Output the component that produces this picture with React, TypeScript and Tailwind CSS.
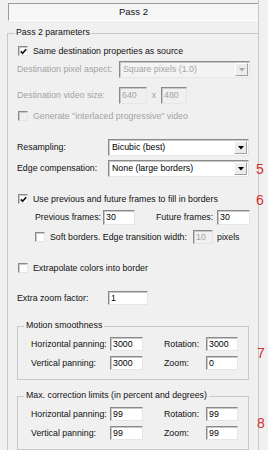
import React from "react";

const sunken =
  "border-t border-l border-t-[#8a8a8a] border-l-[#8a8a8a] border-b border-r border-b-[#e6e6e6] border-r-[#e6e6e6] shadow-[inset_1px_1px_0_#c8c8c8]";

function CheckBox({ checked, disabled }: { checked?: boolean; disabled?: boolean }) {
  return (
    <div
      className={`w-[10px] h-[10px] shrink-0 flex items-center justify-center ${sunken} ${
        disabled ? "bg-[#f0f0f0]" : "bg-white"
      }`}
    >
      {checked && (
        <svg width="7" height="7" viewBox="0 0 7 7">
          <path d="M0.8 3.4 L2.6 5.3 L6.2 1.2" fill="none" stroke="#111" strokeWidth="1.7" />
        </svg>
      )}
    </div>
  );
}

function Field({
  value,
  w,
  h = 14,
  disabled,
}: {
  value: string;
  w: string;
  h?: number;
  disabled?: boolean;
}) {
  return (
    <div
      className={`${w} ${h === 17 ? "h-[17px]" : h === 15 ? "h-[15px]" : "h-[14px]"} shrink-0 flex items-center pl-[2px] ${sunken} ${
        disabled ? "bg-[#f0f0f0] text-[#a3a3a3]" : "bg-white text-black"
      }`}
    >
      {value}
    </div>
  );
}

function Select({ value, w, disabled }: { value: string; w: string; disabled?: boolean }) {
  return (
    <div
      className={`${w} h-[17px] shrink-0 flex items-center ${sunken} ${
        disabled ? "bg-[#f4f4f4] text-[#a3a3a3]" : "bg-white text-black"
      }`}
    >
      <span className="flex-1 pl-[3px]">{value}</span>
      <div className="w-[13px] h-[13px] mr-[1px] flex items-center justify-center bg-[#ececec] border border-t-white border-l-white border-b-[#a0a0a0] border-r-[#a0a0a0]">
        <svg width="6" height="4" viewBox="0 0 6 4">
          <path d="M0 0 H6 L3 3.5 Z" fill={disabled ? "#a8a8a8" : "#000"} />
        </svg>
      </div>
    </div>
  );
}

function Row({ children, className = "" }: { children: React.ReactNode; className?: string }) {
  return <div className={`flex items-center ${className}`}>{children}</div>;
}

function Mark({ n, className }: { n: string; className: string }) {
  return (
    <span
      className={`absolute text-[14px] leading-none text-[#d2302c] font-['Liberation_Sans',Arial,sans-serif] ${className}`}
    >
      {n}
    </span>
  );
}

function PanGroup({
  title,
  a,
  b,
  c,
  d,
  mt,
}: {
  title: string;
  a: string;
  b: string;
  c: string;
  d: string;
  mt: string;
}) {
  return (
    <div className={`relative ${mt} ml-[9px] w-[232px] border border-[#c9c9c9] pb-[9px]`}>
      <span className="absolute -top-[6px] left-[6px] px-[2px] bg-[#f0f0f0]">{title}</span>
      <Row className="mt-[10px] h-[14px] pl-[13px]">
        <span className="w-[79px]">Horizontal panning:</span>
        <Field value={a} w="w-[33px]" />
        <span className="ml-[21px] w-[42px]">Rotation:</span>
        <Field value={b} w="w-[32px]" />
      </Row>
      <Row className="mt-[5px] h-[14px] pl-[13px]">
        <span className="w-[79px]">Vertical panning:</span>
        <Field value={c} w="w-[33px]" />
        <span className="ml-[21px] w-[42px]">Zoom:</span>
        <Field value={d} w="w-[32px]" />
      </Row>
    </div>
  );
}

export default function App() {
  return (
    <div className="relative w-[268px] h-[450px] overflow-hidden bg-[#f0f0f0] text-[#111] text-[8.8px] leading-none font-['Liberation_Sans',Arial,sans-serif]">
      <div className="w-[259px] h-full border-r border-[#c9c9c9] flex flex-col">
        <div className="mt-[3px] ml-[8px] h-[18px] flex items-center justify-center bg-[#f6f6f6] border-t border-l border-[#9c9c9c] border-b border-b-white text-[9.5px]">
          Pass 2
        </div>

        <div className="relative mt-[12px] ml-[7px] flex-1 border-t border-l border-[#c9c9c9] flex flex-col">
          <span className="absolute -top-[6px] left-[7px] px-[1px] bg-[#f0f0f0]">Pass 2 parameters</span>

          <Row className="mt-[11px] h-[12px] pl-[10px] gap-[5px]">
            <CheckBox checked />
            <span>Same destination properties as source</span>
          </Row>

          <Row className="mt-[4px] h-[17px] pl-[9px] text-[#a3a3a3]">
            <span className="w-[102px]">Destination pixel aspect:</span>
            <Select value="Square pixels  (1.0)" w="w-[131px]" disabled />
          </Row>

          <Row className="mt-[9px] h-[17px] pl-[9px] text-[#a3a3a3]">
            <span className="w-[102px]">Destination video size:</span>
            <Field value="640" w="w-[28px]" h={17} disabled />
            <span className="w-[14px] text-center">x</span>
            <Field value="480" w="w-[26px]" h={17} disabled />
          </Row>

          <Row className="mt-[6px] h-[12px] pl-[10px] gap-[5px] text-[#a3a3a3]">
            <CheckBox disabled />
            <span>Generate "interlaced progressive" video</span>
          </Row>

          <Row className="mt-[17px] h-[17px] pl-[9px]">
            <span className="w-[91px]">Resampling:</span>
            <Select value="Bicubic  (best)" w="w-[141px]" />
          </Row>

          <Row className="mt-[4px] h-[17px] pl-[9px]">
            <span className="w-[91px]">Edge compensation:</span>
            <Select value="None  (large borders)" w="w-[141px]" />
          </Row>

          <Row className="mt-[16px] h-[12px] pl-[10px] gap-[5px]">
            <CheckBox checked />
            <span>Use previous and future frames to fill in borders</span>
          </Row>

          <Row className="mt-[5px] h-[15px] pl-[27px]">
            <span className="w-[68px]">Previous frames:</span>
            <Field value="30" w="w-[32px]" h={15} />
            <span className="ml-[21px] w-[61px]">Future frames:</span>
            <Field value="30" w="w-[33px]" h={15} />
          </Row>

          <Row className="mt-[5px] h-[14px] pl-[27px]">
            <CheckBox />
            <span className="ml-[5px] w-[143px]">Soft borders. Edge transition width:</span>
            <Field value="10" w="w-[20px]" disabled />
            <span className="ml-[4px]">pixels</span>
          </Row>

          <Row className="mt-[18px] h-[12px] pl-[10px] gap-[5px]">
            <CheckBox />
            <span>Extrapolate colors into border</span>
          </Row>

          <Row className="mt-[17px] h-[14px] pl-[9px]">
            <span className="w-[91px]">Extra zoom factor:</span>
            <Field value="1" w="w-[40px]" />
          </Row>

          <PanGroup title="Motion smoothness" a="3000" b="3000" c="3000" d="0" mt="mt-[21px]" />
          <PanGroup
            title="Max. correction limits (in percent and degrees)"
            a="99"
            b="99"
            c="99"
            d="99"
            mt="mt-[16px]"
          />
        </div>
      </div>

      <Mark n="5" className="left-[256px] top-[162px]" />
      <Mark n="6" className="left-[256px] top-[193px]" />
      <Mark n="7" className="left-[257px] top-[346px]" />
      <Mark n="8" className="left-[257px] top-[416px]" />
    </div>
  );
}
